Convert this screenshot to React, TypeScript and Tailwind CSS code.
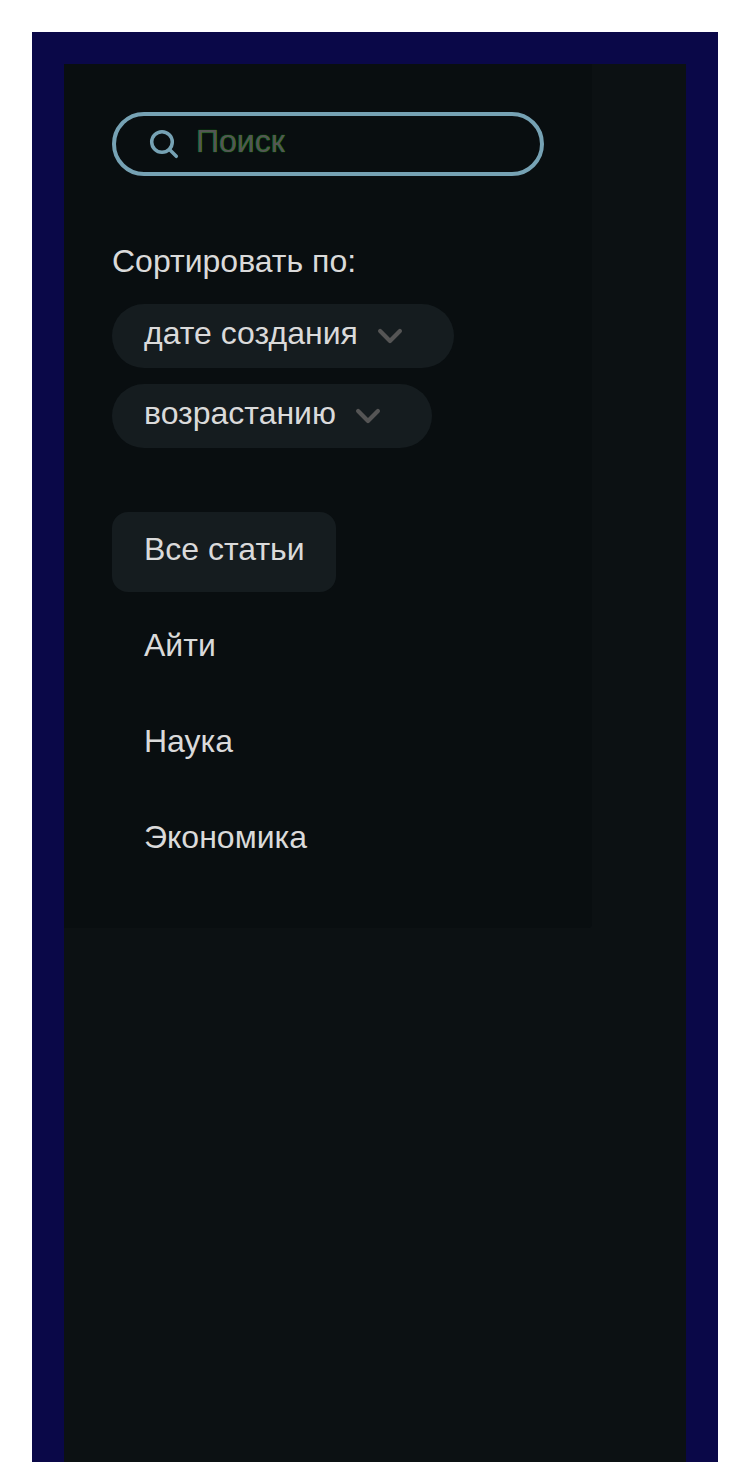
import React from "react";

const categories = ["Все статьи", "Айти", "Наука", "Экономика"];

function Chevron() {
  return (
    <svg className="h-8 w-8 shrink-0" viewBox="0 0 32 32" fill="none" stroke="#555555" strokeWidth="4.2" strokeLinecap="round" strokeLinejoin="round">
      <path d="M6.1 11.1L16 21L25.9 11.1" />
    </svg>
  );
}

function Select({ label, size }: { label: string; size: string }) {
  return (
    <button className={`flex h-16 items-center rounded-full bg-[#151c1f] pl-8 ${size}`}>
      <span className="-mt-1.5 mr-4 whitespace-nowrap">{label}</span>
      <Chevron />
    </button>
  );
}

export default function App() {
  return (
    <div className="h-[1462px] overflow-hidden bg-white px-8 pt-8 font-['Liberation_Sans',sans-serif] text-[32px] leading-9 text-[#dadada]">
      <main className="h-[1430px] bg-[#0a0848] px-8 pt-8">
        <div className="h-full bg-[#0c1113]">
          <aside className="h-[864px] w-[528px] rounded-br-sm bg-[#090e10] px-12 pt-12">
            <label className="flex h-16 items-center rounded-full border-4 border-[#76a2b4] pl-8">
              <svg className="h-8 w-8 shrink-0" viewBox="0 0 32 32" fill="none" stroke="#76a2b4" strokeWidth="3.5" strokeLinecap="round">
                <circle cx="14" cy="14" r="10.3" />
                <path d="M21.5 21.5L28.3 28.3" />
              </svg>
              <input className="-mt-1.5 ml-4 h-10 w-72 bg-transparent outline-none placeholder:text-[#555555] placeholder:[text-shadow:0_0_1px_green,0_0_1px_green]" placeholder="Поиск" />
            </label>
            <section className="pt-[67px]">
              <h2 className="mb-[25px] h-9">Сортировать по:</h2>
              <div className="flex flex-col items-start gap-4">
                <Select label="дате создания" size="w-[342px]" />
                <Select label="возрастанию" size="w-[320px]" />
              </div>
            </section>
            <nav className="mt-16 flex flex-col items-start gap-4">
              {categories.map((category, index) => (
                <button key={category} className={`flex h-20 items-center rounded-2xl px-8 pb-1.5 ${index === 0 ? "w-56 bg-[#151c1f]" : ""}`}>
                  <span className="whitespace-nowrap">{category}</span>
                </button>
              ))}
            </nav>
          </aside>
        </div>
      </main>
    </div>
  );
}
